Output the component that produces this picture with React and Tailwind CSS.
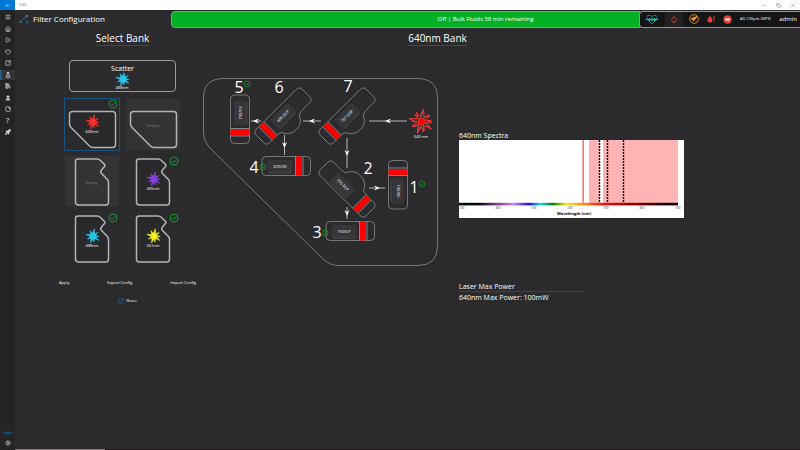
import {
  ArrowLeft, Menu, House, Play, Heart, SquareArrowOutUpRight, FlaskConical, LibraryBig, User, StickyNote,
  CircleHelp, Rocket, Settings, Minus, Copy, X, Droplet,
} from "lucide-react";

const NAV = [
  { label: "Menu", icon: Menu },
  { label: "Home", icon: House },
  { label: "Run", icon: Play },
  { label: "Health", icon: Heart },
  { label: "Edit", icon: SquareArrowOutUpRight },
  { label: "Filters", icon: FlaskConical, active: true },
  { label: "Library", icon: LibraryBig },
  { label: "Users", icon: User, filled: true },
  { label: "Notes", icon: StickyNote },
  { label: "Help", icon: CircleHelp, help: true },
  { label: "Service", icon: Rocket, filled: true },
];

const BANKS = [
  { id: "a", shape: "wide", label: "640nm", color: "#ff2a2a", selected: true },
  { id: "b", shape: "wide" },
  { id: "c", shape: "notch" },
  { id: "d", shape: "notch", label: "405nm", color: "#8a3fe0" },
  { id: "e", shape: "notch", label: "488nm", color: "#25c5ea" },
  { id: "f", shape: "notch", label: "561nm", color: "#f4ee1c" },
];

const SHAPES = {
  wide: "M7.5 12.5 H47.5 Q50.5 12.5 50.5 15.5 V45 Q50.5 48.5 47.5 48.5 H28 Q26 48.5 24.5 47 L6 28.5 Q4.5 27 4.5 25 V15.5 Q4.5 12.5 7.5 12.5 Z",
  notch: "M13 3 H32 Q34 3 35.5 4.5 L39.5 8.5 Q40.5 9.5 39.5 10.5 L36.5 14 Q35 15.5 36.5 17.5 L42 23 Q43.5 24.5 43.5 26.5 V46 Q43.5 49 41 49 H13.5 Q10.5 49 10.5 46 V5.5 Q10.5 3 13 3 Z",
};

const SLOTS = [
  { n: 5, x: 239, y: 93 },
  { n: 6, x: 279, y: 93 },
  { n: 7, x: 348, y: 92 },
  { n: 4, x: 254, y: 173 },
  { n: 2, x: 368, y: 174 },
  { n: 1, x: 414, y: 193 },
  { n: 3, x: 317, y: 238 },
];

const FILTERS = [
  { label: "790/13", x: 240, y: 119, turn: 90, textTurn: 180 },
  { label: "670/30", x: 286, y: 166, turn: 0, textTurn: 0 },
  { label: "750/LP", x: 350, y: 231, turn: 0, textTurn: 0 },
  { label: "730/45", x: 398, y: 185, turn: -90, textTurn: 180 },
];

const SPLITTERS = [
  { label: "685 DLP", x: 283, y: 116, turn: -45, textTurn: 0, shift: 0 },
  { label: "707 DSP", x: 347, y: 116, turn: -45, textTurn: 0, shift: 0 },
  { label: "755 DLP", x: 347, y: 189, turn: 225, textTurn: 180, shift: 6 },
];

const ARROWS = [
  { x: 256, y: 121, len: 5, turn: 180 },
  { x: 312, y: 121, len: 9, turn: 180 },
  { x: 388, y: 121, len: 19, turn: 180 },
  { x: 284.5, y: 145, len: 10, turn: 90 },
  { x: 347, y: 153, len: 15, turn: 90 },
  { x: 347, y: 213, len: 6, turn: 90 },
  { x: 377, y: 188, len: 8, turn: 0 },
];

const TICKS = [300, 400, 500, 600, 700, 800, 900];

export default function App() {
  return (
    <div className="flex min-h-screen flex-col bg-[#2b2b2d] font-['Open_Sans',sans-serif] text-white">
      <TitleBar />
      <div className="flex flex-1">
        <Sidebar />
        <main className="flex min-w-0 flex-1 flex-col">
          <Header />
          <div className="flex flex-1">
            <BankPicker />
            <BankDetail />
          </div>
          <div className="h-px bg-[#1a1516]">
            <div className="h-px w-[90px] bg-[#7c7877]" />
          </div>
        </main>
      </div>
    </div>
  );
}

function TitleBar() {
  return (
    <div className="flex h-2.5 items-center bg-white text-[#777]">
      <button aria-label="Back" className="flex h-full w-[15px] items-center justify-center bg-[#0078d7] text-white">
        <ArrowLeft size={5} />
      </button>
      <span className="ml-1 flex-1 text-[4px] leading-none">SGS</span>
      <div className="flex items-center gap-[9px] pr-[5px]">
        <button aria-label="Minimize"><Minus size={5} /></button>
        <button aria-label="Restore"><Copy size={5} /></button>
        <button aria-label="Close"><X size={5} /></button>
      </div>
    </div>
  );
}

function Sidebar() {
  return (
    <nav className="flex w-[15px] flex-col justify-between bg-[#242426] pt-0.5 text-[#e4e4e4]">
      <div className="flex h-[125px] flex-col justify-between">
        {NAV.map(({ label, icon: Icon, active, filled, help }) => (
          <button key={label} aria-label={label}
            className={`flex h-2.5 items-center justify-center ${active ? "border-l-2 border-[#1d5f86] bg-[#343437] pr-0.5" : ""}`}>
            {help ? <span className="text-[7px] leading-none">?</span>
              : <Icon size={6} strokeWidth={2.5} fill={filled ? "currentColor" : "none"} />}
          </button>
        ))}
      </div>
      <div className="flex flex-col items-center gap-1 pb-1">
        <svg width="10" height="6" viewBox="0 0 10 6" fill="none" stroke="#17577a">
          <path d="M0 3 H2 L3 1.5 L4 4.5 L5 1.5 L6 4.5 L7 2 L8 3 H10" />
        </svg>
        <button aria-label="Settings" className="text-[#b5b5b5]"><Settings size={6} strokeWidth={3} /></button>
      </div>
    </nav>
  );
}

function Header() {
  return (
    <header className="flex h-[18px] items-center">
      <div className="flex w-[156px] items-center gap-1 pl-1">
        <svg width="10" height="10" viewBox="0 0 10 10" fill="none" stroke="#2b7096">
          <path d="M1 7 L3 8.5 M3 6 L8 1.5" />
          <path d="M5 4 L9 8.5" stroke="#24597a" />
          <circle cx="1.5" cy="8" r="1.2" fill="#2b7096" stroke="none" />
          <circle cx="8" cy="2" r="1.2" fill="#5d7482" stroke="none" />
          <circle cx="8.5" cy="8.5" r="1.2" fill="#24597a" stroke="none" />
        </svg>
        <h1 className="text-[8px] leading-none whitespace-nowrap">Filter Configuration</h1>
      </div>
      <p className="flex h-[17px] flex-1 items-center justify-center rounded-l border border-[#77a77b] bg-[#06b025] pl-40 text-[6px] leading-none whitespace-nowrap">
        Off | Bulk Fluids 38 min remaining
      </p>
      <StatusBar />
    </header>
  );
}

function StatusBar() {
  return (
    <div className="-ml-px flex h-[17px] w-[161px] items-center rounded-l border border-r-0 border-[#8f9890] bg-[#151516] pr-[3px] pl-[5px]">
      <svg width="14" height="11" viewBox="0 0 14 11" fill="none">
        <path d="M7 10 L2.5 5.5 C0 2.5 4 -0.5 7 2.5 C10 -0.5 14 2.5 11.5 5.5 Z" stroke="#1583b3" />
        <path d="M1 5.5 H13" stroke="#1fc79a" strokeWidth="1.2" />
        <path d="M4.5 4 V7 M7 3.5 V7.5 M9.5 4 V7" stroke="#1fc79a" />
      </svg>
      <div className="ml-1.5 flex h-full w-[18px] items-center justify-center bg-[#222223] text-[#d83b35]">
        <Droplet size={8} strokeWidth={2.5} />
      </div>
      <svg className="ml-1.5" width="10" height="10" viewBox="0 0 10 10" fill="none">
        <circle cx="5" cy="5" r="4.3" stroke="#d9861b" />
        <path d="M2.5 4.5 L4.5 7 L8 2.5 Z" fill="#f39a1f" stroke="#f39a1f" />
      </svg>
      <svg className="ml-2" width="8" height="8" viewBox="0 0 8 8" fill="#e5403a">
        <path d="M3 0.5 Q5.5 4 5.5 5.5 Q5.5 7.5 3 7.5 Q0.5 7.5 0.5 5.5 Q0.5 4 3 0.5 Z" />
        <path d="M6.5 1 h1 v4 h-1 Z M6.5 6 h1 v1.5 h-1 Z" />
      </svg>
      <svg className="ml-2" width="9" height="9" viewBox="0 0 9 9">
        <circle cx="4.5" cy="4.5" r="4.2" fill="#ee4036" />
        <rect x="2" y="3.5" width="5" height="2" fill="#fff" />
      </svg>
      <span className="ml-2 flex-1 text-[4px] leading-none whitespace-nowrap">A0-100µm-30PSI</span>
      <span className="text-[6px] leading-none">admin</span>
    </div>
  );
}

function BankPicker() {
  return (
    <section className="w-[188px] pt-1 pr-[7px] pl-11">
      <div className="ml-1.5 w-[115px]">
        <Heading>Select Bank</Heading>
        <button className="mx-1 mt-3.5 flex h-8 w-[107px] flex-col items-center rounded border border-[#9a9a9c] pt-1">
          <span className="text-[7px] leading-[8px]">Scatter</span>
          <svg width="54" height="18" viewBox="0 0 54 18">
            <Burst x={27} y={6} r={7} color="#25c5ea" />
            <text x="26" y="16" fontSize="4" fill="#fff" textAnchor="middle">488nm</text>
          </svg>
        </button>
        <div className="mt-[7px] grid grid-cols-2 gap-x-[7px] gap-y-1.5">
          {BANKS.map(b => <BankTile key={b.id} bank={b} />)}
        </div>
      </div>
      <div className="mt-[13px] flex justify-between text-[4px] leading-[12px]">
        <button>Apply</button>
        <button>Export Config</button>
        <button>Import Config</button>
      </div>
      <div className="mt-1.5 flex justify-center">
        <button className="flex items-center gap-0.5 text-[4px] leading-[12px]">
          <SquareArrowOutUpRight size={6} strokeWidth={2.5} className="text-[#1a6ea8]" /> Share
        </button>
      </div>
    </section>
  );
}

function Heading({ children }) {
  return (
    <h2 className="mx-auto w-fit border-b border-[#1f5474] text-[10px] leading-[13px] whitespace-nowrap">{children}</h2>
  );
}

function BankTile({ bank }) {
  const empty = !bank.label;
  return (
    <button className={`h-[51px] w-[54px] ${empty ? "bg-[#333335]" : ""} ${bank.selected ? "outline outline-[#1b527d]" : ""}`}>
      <svg width="54" height="51" viewBox="0 0 54 51">
        <path d={SHAPES[bank.shape]} fill={empty ? "none" : "#29292b"} stroke="#b4b4b6" strokeWidth="1.5" />
        {empty ? (
          <text x="27" y="28" fontSize="4" fill="#838385" textAnchor="middle">Empty</text>
        ) : (
          <>
            <Burst x={28} y={23} r={7} color={bank.color} />
            <text x="27" y="34" fontSize="4" fill="#fff" textAnchor="middle">{bank.label}</text>
            <Check x={48} y={5} r={4} />
          </>
        )}
      </svg>
    </button>
  );
}

function BankDetail() {
  return (
    <section className="mr-[116px] flex-1 pt-1">
      <div className="pr-3">
        <Heading>640nm Bank</Heading>
      </div>
      <div className="mt-8 grid grid-cols-[235fr_225fr] items-start gap-x-[21px]">
        <OpticsDiagram />
        <div className="pt-[53px] text-[7px] leading-[9px]">
          <h3>640nm Spectra</h3>
          <SpectraChart />
          <h3 className="mt-16 w-[125px] border-b border-[#1d5068]">Laser Max Power</h3>
          <p className="mt-px">640nm Max Power: 100mW</p>
        </div>
      </div>
    </section>
  );
}

function OpticsDiagram() {
  return (
    <svg className="w-full overflow-visible" viewBox="203 78 235 188" fill="none">
      <path stroke="#8a8a8c" strokeWidth="0.8"
        d="M224 78.5 H417 Q437.5 78.5 437.5 98 V246 Q437.5 265.5 418 265.5 H339 Q330 265.5 323 259 L209 147 Q203.5 141 203.5 133 V98 Q203.5 78.5 224 78.5 Z" />
      {ARROWS.map((a, i) => (
        <g key={i} transform={`translate(${a.x} ${a.y}) rotate(${a.turn})`}>
          <path d={`M${-a.len} 0 H${a.len}`} stroke="#b9b9bb" />
          <path d="M3 0 L-3 -2.5 L-1 0 L-3 2.5 Z" fill="#fff" />
        </g>
      ))}
      {FILTERS.map(f => (
        <g key={f.label} transform={`translate(${f.x} ${f.y}) rotate(${f.turn})`}>
          <rect x="-24" y="-9.5" width="48.5" height="19" rx="4" fill="#2b2b2d" stroke="#8a8a8c" strokeWidth="0.8" />
          <Plate x={-6} label={f.label} turn={f.textTurn} />
          <path d="M9.5 -9.5 V9.5 M17 -9.5 V9.5" stroke="#9a9a9c" strokeWidth="0.8" />
          <rect x="10" y="-9.5" width="6" height="19" fill="#fe0000" />
        </g>
      ))}
      {SPLITTERS.map(s => (
        <g key={s.label} transform={`translate(${s.x} ${s.y}) rotate(${s.turn})`}>
          <path stroke="#8a8a8c" strokeWidth="0.8"
            d="M-28 -9.5 H28 Q32.5 -9.5 32.5 -5 V5 Q32.5 9.5 28 9.5 H16 Q13 9.5 11.5 12 C9 17 5 19 0 19 C-6 19 -10 16 -12 12 Q-13 9.5 -16 9.5 H-28 Q-32.5 9.5 -32.5 5 V-5 Q-32.5 -9.5 -28 -9.5 Z" />
          <Plate x={s.shift} label={s.label} turn={s.textTurn} />
          <path d="M-25 -9.5 V9.5 M-17.5 -9.5 V9.5" stroke="#9a9a9c" strokeWidth="0.8" />
          <rect x="-24" y="-9.5" width="6" height="19" fill="#fe0000" />
        </g>
      ))}
      {SLOTS.map(s => (
        <text key={s.n} x={s.x} y={s.y} fontSize="16" fill="#fff" textAnchor="middle">{s.n}</text>
      ))}
      <Check x={247} y={84} r={3} />
      <Check x={263} y={167} r={3} />
      <Check x={325} y={233} r={3} />
      <Check x={422} y={184} r={3} />
      <Burst x={421.5} y={121.5} r={12} color="#ff3a3a" hollow />
      <text x="421" y="138" fontSize="4" fill="#fff" textAnchor="middle">640 nm</text>
    </svg>
  );
}

function Plate({ x, label, turn }) {
  return (
    <g transform={`translate(${x} 0) rotate(${turn})`}>
      <rect x="-12.5" y="-6" width="25" height="13" rx="2" fill="#363638" />
      <path d="M-11 7 H11" stroke="#5c5c5e" strokeWidth="0.6" />
      <text y="1.5" fontSize="4" fill="#fff" textAnchor="middle">{label}</text>
    </g>
  );
}

function Check({ x, y, r }) {
  return (
    <g transform={`translate(${x} ${y}) scale(${r / 4})`} fill="none" stroke="#129a2c">
      <circle r="4" />
      <path d="M-2 0 L-0.5 1.7 L2.2 -1.6" />
    </g>
  );
}

// hollow draws outlined rays for the large laser source, otherwise a solid star
function Burst({ x, y, r, color, hollow }) {
  const rays = [2, 40, 78, 112, 150, 195, 238, 282, 322];
  return (
    <g transform={`translate(${x} ${y}) scale(${r / 12})`} stroke={color}>
      {rays.map((deg, i) => (
        <g key={deg} transform={`rotate(${deg})`}>
          <path d={i % 2 ? "M4 -1.8 L12.5 -0.5 L4 1.8" : "M4 -1.5 L10.5 0.5 L4 1.5"} fill={hollow ? "none" : color} strokeWidth={hollow ? 0.9 : 1} />
          {hollow && <path d="M5 3 L8.5 5.2" strokeWidth="1" />}
        </g>
      ))}
      <circle r={hollow ? 3.5 : 5} fill={hollow ? "#ff0000" : color} strokeWidth="0.8" />
    </g>
  );
}

function SpectraChart() {
  return (
    <svg className="w-full" viewBox="0 0 225 78">
      <defs>
        <linearGradient id="spectrum">
          <stop offset="0" stopColor="#000" />
          <stop offset="0.09" stopColor="#120012" />
          <stop offset="0.17" stopColor="#7d3c8c" />
          <stop offset="0.25" stopColor="#cf7fe0" />
          <stop offset="0.32" stopColor="#1a10e0" />
          <stop offset="0.37" stopColor="#19d7e6" />
          <stop offset="0.43" stopColor="#0a7a12" />
          <stop offset="0.49" stopColor="#f2ee20" />
          <stop offset="0.57" stopColor="#ff8a10" />
          <stop offset="0.66" stopColor="#f01010" />
          <stop offset="0.8" stopColor="#8a0000" />
          <stop offset="0.95" stopColor="#100000" />
          <stop offset="1" stopColor="#000" />
        </linearGradient>
      </defs>
      <rect width="225" height="78" fill="#fff" />
      <rect x="130" width="89" height="63" fill="#ffb3b3" />
      <rect x="141" width="3" height="63" fill="#fff" />
      <rect x="123.5" width="1.3" height="63" fill="#f4584e" />
      <path d="M140.5 0 V63 M148.5 0 V63 M164.5 0 V63" stroke="#000" strokeWidth="1.4" strokeDasharray="2 1" />
      <rect y="62.8" width="219" height="2.6" fill="url(#spectrum)" />
      {TICKS.map((t, i) => (
        <text key={t} x={3 + i * 36} y="69" fontSize="3" fill="#444" textAnchor="middle">{t}</text>
      ))}
      <text x="115" y="75" fontSize="4" fontWeight="700" fill="#000" textAnchor="middle">Wavelength (nm)</text>
    </svg>
  );
}
